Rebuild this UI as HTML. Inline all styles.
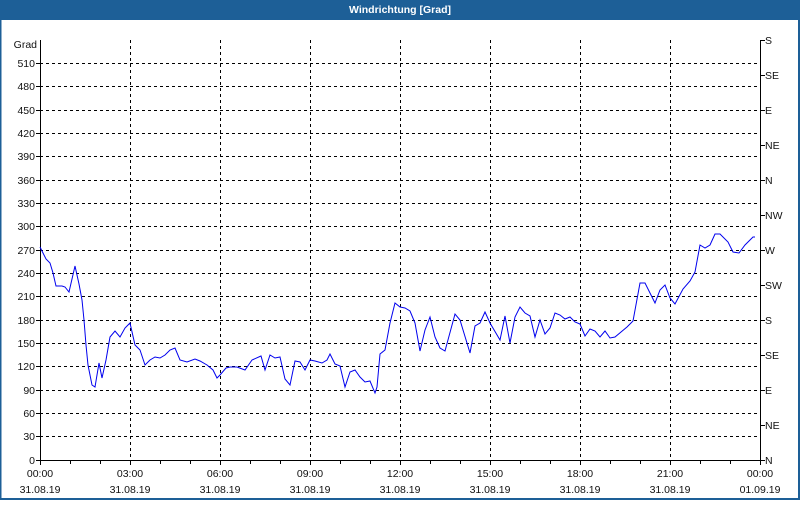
<!DOCTYPE html>
<html><head><meta charset="utf-8"><style>
html,body{margin:0;padding:0;background:#fff;}
body{width:800px;height:500px;overflow:hidden;position:relative;}
svg text{font-family:"Liberation Sans",sans-serif;font-size:10.5px;fill:#111;}
</style></head><body>
<svg width="800" height="500" xmlns="http://www.w3.org/2000/svg">
<rect x="0" y="0" width="800" height="500" fill="#fff"/>
<rect x="0" y="0" width="800" height="20" fill="#1d5f97"/>
<rect x="0" y="0" width="1.5" height="500" fill="#1d5f97"/>
<rect x="798" y="0" width="2" height="500" fill="#1d5f97"/>
<rect x="0" y="498" width="800" height="2" fill="#1d5f97"/>
<text x="400" y="13" text-anchor="middle" style="fill:#fff;font-weight:bold;font-size:10.5px">Windrichtung [Grad]</text>
<g stroke="#000" stroke-width="1" stroke-dasharray="3,3" fill="none">
<path d="M40 63.5H760M40 86.5H760M40 110.5H760M40 133.5H760M40 156.5H760M40 180.5H760M40 203.5H760M40 226.5H760M40 250.5H760M40 273.5H760M40 296.5H760M40 320.5H760M40 343.5H760M40 366.5H760M40 390.5H760M40 413.5H760M40 436.5H760"/>
<path d="M130.5 40V460M220.5 40V460M310.5 40V460M400.5 40V460M490.5 40V460M580.5 40V460M670.5 40V460"/>
</g>
<g stroke="#000" stroke-width="1" fill="none">
<path d="M40.5 40V460.5H760M760.5 40V460.5"/>
<path d="M36 63.5H40M36 86.5H40M36 110.5H40M36 133.5H40M36 156.5H40M36 180.5H40M36 203.5H40M36 226.5H40M36 250.5H40M36 273.5H40M36 296.5H40M36 320.5H40M36 343.5H40M36 366.5H40M36 390.5H40M36 413.5H40M36 436.5H40M36 460.5H40"/>
<path d="M760 40.5H765M760 75.5H765M760 110.5H765M760 145.5H765M760 180.5H765M760 215.5H765M760 250.5H765M760 285.5H765M760 320.5H765M760 355.5H765M760 390.5H765M760 425.5H765M760 460.5H765"/>
<path d="M40.5 460V465M70.5 460V464M100.5 460V464M130.5 460V465M160.5 460V464M190.5 460V464M220.5 460V465M250.5 460V464M280.5 460V464M310.5 460V465M340.5 460V464M370.5 460V464M400.5 460V465M430.5 460V464M460.5 460V464M490.5 460V465M520.5 460V464M550.5 460V464M580.5 460V465M610.5 460V464M640.5 460V464M670.5 460V465M700.5 460V464M730.5 460V464M760.5 460V465"/>
</g>
<polyline fill="none" stroke="#0000ee" stroke-width="1" points="40,247 46,259 50,263 53,273 56,286 62,286 65,287 69,292 75,266 79,284 82,300 84,320 86,345 88,365 92,385 95,387 99,363 102,378 106,360 110,337 115,331 120,337 125,328 130,323 135,345 140,350 145,365 150,360 155,357 160,358 165,355 170,350 175,348 180,360 187,362 195,359 200,361 207,365 213,370 217,378 220,375 226,368 230,367 237,367 245,370 252,360 261,356 265,370 270,355 275,358 280,357 285,379 290,385 295,361 300,362 305,370 310,360 315,361 322,363 327,360 330,354 335,364 340,366 345,387 350,372 355,370 360,377 365,382 370,381 375,393 377,387 380,354 385,350 390,323 395,303 400,307 405,308 410,311 415,323 420,351 425,330 430,317 435,337 440,348 445,351 455,314 460,320 470,353 475,326 480,323 485,312 490,323 500,340 505,316 510,343 515,317 520,307 525,313 530,316 535,337 540,320 545,334 550,328 555,313 560,315 565,319 570,317 575,322 580,324 585,336 590,329 595,331 600,337 605,331 610,338 615,337 627,327 633,321 640,283 645,283 650,293 655,303 660,290 665,285 670,298 675,304 683,289 690,281 695,272 700,245 705,248 710,245 715,234 720,234 728,242 733,252 739,253 745,245 753,237 755,237"/>
<g text-anchor="end">
<text x="37" y="48">Grad</text>
<text x="35" y="67">510</text><text x="35" y="90">480</text><text x="35" y="114">450</text><text x="35" y="137">420</text><text x="35" y="160">390</text><text x="35" y="184">360</text><text x="35" y="207">330</text><text x="35" y="230">300</text><text x="35" y="254">270</text><text x="35" y="277">240</text><text x="35" y="300">210</text><text x="35" y="324">180</text><text x="35" y="347">150</text><text x="35" y="370">120</text><text x="35" y="394">90</text><text x="35" y="417">60</text><text x="35" y="440">30</text><text x="35" y="464">0</text>
</g>
<g>
<text x="765" y="44">S</text><text x="765" y="79">SE</text><text x="765" y="114">E</text><text x="765" y="149">NE</text><text x="765" y="184">N</text><text x="765" y="219">NW</text><text x="765" y="254">W</text><text x="765" y="289">SW</text><text x="765" y="324">S</text><text x="765" y="359">SE</text><text x="765" y="394">E</text><text x="765" y="429">NE</text><text x="765" y="464">N</text>
</g>
<g text-anchor="middle">
<text x="40" y="477">00:00</text><text x="130" y="477">03:00</text><text x="220" y="477">06:00</text><text x="310" y="477">09:00</text><text x="400" y="477">12:00</text><text x="490" y="477">15:00</text><text x="580" y="477">18:00</text><text x="670" y="477">21:00</text><text x="760" y="477">00:00</text>
<text x="40" y="493">31.08.19</text><text x="130" y="493">31.08.19</text><text x="220" y="493">31.08.19</text><text x="310" y="493">31.08.19</text><text x="400" y="493">31.08.19</text><text x="490" y="493">31.08.19</text><text x="580" y="493">31.08.19</text><text x="670" y="493">31.08.19</text><text x="760" y="493">01.09.19</text>
</g>
</svg>
</body></html>
